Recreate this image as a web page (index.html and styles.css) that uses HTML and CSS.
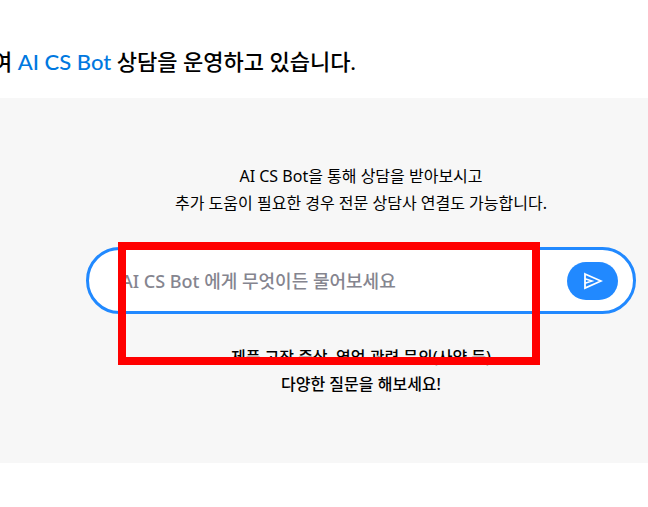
FILE: index.html
```html
<!DOCTYPE html>
<html lang="ko">
<head>
    <meta charset="UTF-8">
    <meta name="viewport" content="width=device-width, initial-scale=1.0">
    <title>AI CS Bot</title>
    <link rel="stylesheet" href="styles.css">
</head>
<body>
    <h2 class="title">여 <span>AI CS Bot</span> 상담을 운영하고 있습니다.</h2>

    <section class="bot-panel">
        <p class="intro">AI CS Bot을 통해 상담을 받아보시고<br>추가 도움이 필요한 경우 전문 상담사 연결도 가능합니다.</p>

        <form class="ask">
            <input type="text" class="ask-input" aria-label="질문 입력" placeholder="AI CS Bot 에게 무엇이든 물어보세요">
            <button type="button" class="ask-send" aria-label="보내기">
                <svg width="20" height="18" viewBox="0 0 20 18" fill="none" stroke="#fff">
                    <path d="M2 2 L18 9 L2 16 Z" stroke-width="1.8" />
                    <path d="M2 6.8 L9 9 L2 11.2" stroke-width="1.5" />
                </svg>
            </button>
            <!-- red highlight -->
            <div class="highlight"></div>
        </form>

        <p class="guide">제품 고장 증상, 영업 관련 문의(사양 등)<br>다양한 질문을 해보세요!</p>
    </section>
</body>
</html>
```

FILE: styles.css
```css
* {
    margin: 0;
    padding: 0;
    box-sizing: border-box;
}

body {
    background: #fff;
    color: #000;
    font-family: "Noto Sans", "Noto Sans CJK KR", sans-serif;
    overflow-x: hidden;
}

.title {
    margin: 46px 0 20px -8px;
    font-family: Lato, "Noto Sans CJK KR", sans-serif;
    font-size: 22px;
    font-weight: 500;
    line-height: 32px;
    white-space: nowrap;
}

.title span {
    color: #0078e0;
}

.bot-panel {
    padding: 65px 12px 65px 86px;
    background: #f7f7f7;
    text-align: center;
}

.intro,
.guide {
    font-size: 16px;
    line-height: 27px;
}

.intro {
    font-weight: 400;
}

.guide {
    font-weight: 500;
}

.ask {
    position: relative;
    display: flex;
    align-items: center;
    height: 67px;
    margin: 30px 0;
    padding: 0 15px 0 32px;
    border: 3px solid #2189ff;
    border-radius: 34px;
    background: #fff;
}

.ask-input {
    flex: 1;
    min-width: 0;
    border: 0;
    outline: 0;
    background: transparent;
    font-family: inherit;
    font-size: 18px;
    font-weight: 500;
}

.ask-input::placeholder {
    color: #85858f;
    opacity: 1;
}

.ask-send {
    display: flex;
    align-items: center;
    justify-content: center;
    width: 51px;
    height: 38px;
    border: 0;
    border-radius: 19px;
    background: #2189ff;
}

.highlight {
    position: absolute;
    top: -8px;
    left: 29px;
    right: 93px;
    height: 123px;
    border: 8px solid #f00;
    pointer-events: none;
}
```
